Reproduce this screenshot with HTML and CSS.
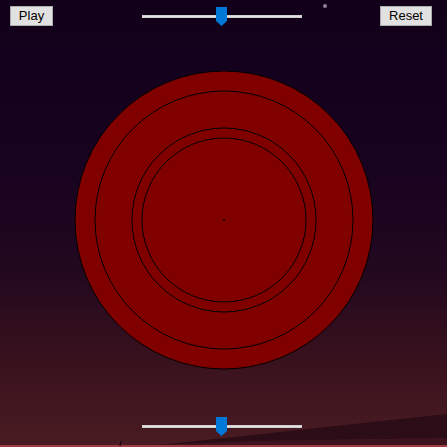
FILE: index.html
```html
<!DOCTYPE html>
<html>
<head>
<meta charset="utf-8">
<link rel="stylesheet" href="styles.css">
</head>
<body>
<svg class="deco" width="447" height="447" viewBox="0 0 447 447">
  <circle cx="325" cy="6" r="2" fill="#8a8090"/>
  <polygon points="150,446 447,414 447,438 260,441" fill="#2c0c17"/>
  <polygon points="260,441 447,438 447,445 120,446" fill="#3d141d"/>
  <rect x="0" y="445" width="447" height="2" fill="#a23a44"/>
  <path d="M120 446 L121 441" stroke="#1a0510" stroke-width="1.2"/>
</svg>
<div class="app">
  <div class="toolbar">
    <button class="btn btn-play">Play</button>
    <div class="slider slider-top">
      <div class="track"></div>
      <svg class="thumb" width="11" height="19" viewBox="0 0 11 19"><path d="M0 0 H11 V14 L5.5 19 L0 14 Z" fill="#0078d7"/></svg>
    </div>
    <button class="btn btn-reset">Reset</button>
  </div>
  <svg class="stage" width="447" height="391" viewBox="0 0 447 391">
    <g fill="#800000" stroke="#000" stroke-width="1">
      <circle cx="224" cy="194" r="149"/>
      <circle cx="224" cy="194" r="129"/>
      <circle cx="224" cy="194" r="92"/>
      <circle cx="224" cy="194" r="82"/>
    </g>
    <rect x="223" y="193" width="2" height="2" fill="#200000"/>
  </svg>
  <div class="bottom">
    <div class="slider">
      <div class="track"></div>
      <svg class="thumb" width="11" height="19" viewBox="0 0 11 19"><path d="M0 0 H11 V14 L5.5 19 L0 14 Z" fill="#0078d7"/></svg>
    </div>
  </div>
</div>
</body>
</html>
```
FILE: styles.css
```css
html, body {
  margin: 0;
  padding: 0;
}
body {
  width: 447px;
  height: 447px;
  overflow: hidden;
  position: relative;
  background: linear-gradient(to bottom, #12001a 0%, #170220 35%, #22081f 60%, #3a121e 82%, #4a1c22 100%);
  font-family: "Liberation Sans", Arial, sans-serif;
}
.deco {
  position: absolute;
  left: 0;
  top: 0;
  z-index: 0;
}
.app {
  position: relative;
  z-index: 1;
  display: flex;
  flex-direction: column;
}
.toolbar {
  display: flex;
  align-items: flex-start;
  height: 26px;
  box-sizing: border-box;
  padding: 6px 15px 0 10px;
}
.btn {
  height: 20px;
  padding: 0;
  margin: 0;
  background: #e1e1e1;
  border: 1px solid #adadad;
  border-radius: 0;
  font-family: "Liberation Sans", Arial, sans-serif;
  font-size: 13px;
  color: #000;
  line-height: 18px;
}
.btn-play {
  width: 43px;
}
.btn-reset {
  width: 52px;
  margin-left: auto;
}
.slider {
  position: relative;
  width: 160px;
  height: 19px;
}
.slider-top {
  margin-left: 89px;
  margin-top: 1px;
}
.track {
  position: absolute;
  left: 0;
  right: 0;
  top: 8px;
  height: 3px;
  background: #e2e2e2;
  box-shadow: inset 0 0 0 1px #d0d0d0;
}
.thumb {
  position: absolute;
  left: 74px;
  top: 0;
  display: block;
}
.stage {
  display: block;
}
.bottom {
  padding-left: 142px;
}
```
